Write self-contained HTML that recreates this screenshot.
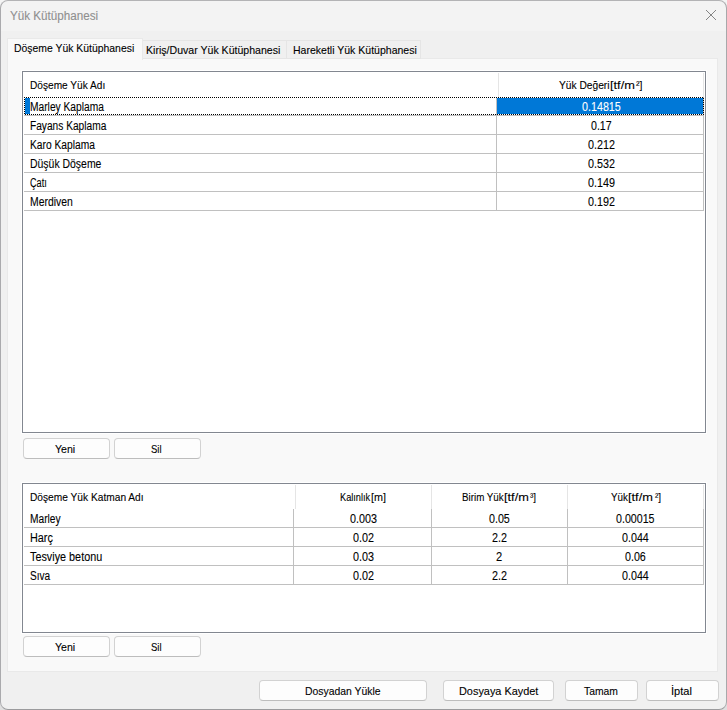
<!DOCTYPE html>
<html><head><meta charset="utf-8"><title>Yük Kütüphanesi</title>
<style>
html,body{margin:0;padding:0;}
body{width:727px;height:710px;background:linear-gradient(180deg,#f4f4f4 0,#f4f4f4 40%,#dfdfdf 60%,#dfdfdf 100%);overflow:hidden;font-family:"Liberation Sans", sans-serif;position:relative;}
#win{position:absolute;left:0;top:0;width:727px;height:710px;border-radius:8px;background:#f0f0f0;overflow:hidden;}
#frame{position:absolute;left:0;top:0;width:727px;height:710px;box-sizing:border-box;border:1px solid;border-color:#b3b3b5 #a8a8aa #9b9b9d #aaaaad;border-radius:8px;}
.a{position:absolute;}
.t{position:absolute;white-space:pre;transform-origin:0 0;display:block;-webkit-text-stroke:0.1px currentColor;}
</style></head><body>
<div id="win">
<div class="a" style="left:0px;top:0px;width:727px;height:31px;background:#f3f3f3"></div>
<svg class="a" style="left:705px;top:9px" width="12" height="12" viewBox="0 0 12 12"><path d="M1 1 L11 11 M11 1 L1 11" stroke="#848484" stroke-width="1" fill="none"/></svg>
<div class="a" style="left:7px;top:58px;width:711px;height:614px;background:#f9f9f9;border:1px solid #e9e9e9;box-sizing:border-box"></div>
<div class="a" style="left:142px;top:40px;width:145px;height:19px;background:#f0f0f0;border:1px solid #e5e5e5;box-sizing:border-box"></div>
<div class="a" style="left:286px;top:40px;width:135px;height:19px;background:#f0f0f0;border:1px solid #e5e5e5;box-sizing:border-box"></div>
<div class="a" style="left:7px;top:38px;width:136px;height:22px;background:#f9f9f9;border:1px solid #e9e9e9;border-bottom:none;box-sizing:border-box"></div>
<div class="a" style="left:22px;top:71px;width:684px;height:362px;background:#fff;border:1px solid #828790;box-sizing:border-box;box-shadow:0 0 0 1px #fff"></div>
<div class="a" style="left:498px;top:73px;width:1px;height:24px;background:#e5e5e5"></div>
<div class="a" style="left:703px;top:73px;width:1px;height:24px;background:#e5e5e5"></div>
<div class="a" style="left:24px;top:115px;width:680px;height:1px;background:#c0c0c0"></div>
<div class="a" style="left:24px;top:134px;width:680px;height:1px;background:#c0c0c0"></div>
<div class="a" style="left:24px;top:153px;width:680px;height:1px;background:#c0c0c0"></div>
<div class="a" style="left:24px;top:172px;width:680px;height:1px;background:#c0c0c0"></div>
<div class="a" style="left:24px;top:191px;width:680px;height:1px;background:#c0c0c0"></div>
<div class="a" style="left:24px;top:210px;width:680px;height:1px;background:#c0c0c0"></div>
<div class="a" style="left:496px;top:97px;width:1px;height:114px;background:#c0c0c0"></div>
<div class="a" style="left:703px;top:97px;width:1px;height:114px;background:#c0c0c0"></div>
<div class="a" style="left:22px;top:483px;width:684px;height:150px;background:#fff;border:1px solid #828790;box-sizing:border-box;box-shadow:0 0 0 1px #fff"></div>
<div class="a" style="left:295px;top:485px;width:1px;height:24px;background:#e5e5e5"></div>
<div class="a" style="left:431px;top:485px;width:1px;height:24px;background:#e5e5e5"></div>
<div class="a" style="left:567px;top:485px;width:1px;height:24px;background:#e5e5e5"></div>
<div class="a" style="left:703px;top:485px;width:1px;height:24px;background:#e5e5e5"></div>
<div class="a" style="left:24px;top:527px;width:680px;height:1px;background:#c0c0c0"></div>
<div class="a" style="left:24px;top:546px;width:680px;height:1px;background:#c0c0c0"></div>
<div class="a" style="left:24px;top:565px;width:680px;height:1px;background:#c0c0c0"></div>
<div class="a" style="left:24px;top:584px;width:680px;height:1px;background:#c0c0c0"></div>
<div class="a" style="left:293px;top:509px;width:1px;height:76px;background:#c0c0c0"></div>
<div class="a" style="left:431px;top:509px;width:1px;height:76px;background:#c0c0c0"></div>
<div class="a" style="left:567px;top:509px;width:1px;height:76px;background:#c0c0c0"></div>
<div class="a" style="left:703px;top:509px;width:1px;height:76px;background:#c0c0c0"></div>
<div class="a" style="left:25px;top:98px;width:5px;height:16px;background:#0078d7"></div>
<div class="a" style="left:497px;top:98px;width:206px;height:16px;background:#0078d7"></div>
<div class="a" style="left:24px;top:97px;width:680px;height:1px;background:linear-gradient(90deg,#000 50%,transparent 50%) 0 0/2px 1px repeat-x"></div>
<div class="a" style="left:24px;top:114px;width:680px;height:1px;background:linear-gradient(90deg,transparent 50%,#000 50%) 0 0/2px 1px repeat-x"></div>
<div class="a" style="left:24px;top:97px;width:1px;height:18px;background:linear-gradient(180deg,#000 50%,transparent 50%) 0 0/1px 2px repeat-y"></div>
<div class="a" style="left:703px;top:97px;width:1px;height:18px;background:linear-gradient(180deg,transparent 50%,#000 50%) 0 0/1px 2px repeat-y"></div>
<div class="a" style="left:23px;top:438px;width:87px;height:21px;background:#fdfdfd;border:1px solid #d2d2d2;border-bottom-color:#bdbdbd;border-radius:4px;box-sizing:border-box"></div>
<div class="a" style="left:114px;top:438px;width:87px;height:21px;background:#fdfdfd;border:1px solid #d2d2d2;border-bottom-color:#bdbdbd;border-radius:4px;box-sizing:border-box"></div>
<div class="a" style="left:23px;top:636px;width:87px;height:21px;background:#fdfdfd;border:1px solid #d2d2d2;border-bottom-color:#bdbdbd;border-radius:4px;box-sizing:border-box"></div>
<div class="a" style="left:114px;top:636px;width:87px;height:21px;background:#fdfdfd;border:1px solid #d2d2d2;border-bottom-color:#bdbdbd;border-radius:4px;box-sizing:border-box"></div>
<div class="a" style="left:259px;top:680px;width:168px;height:21px;background:#fdfdfd;border:1px solid #d2d2d2;border-bottom-color:#bdbdbd;border-radius:4px;box-sizing:border-box"></div>
<div class="a" style="left:443px;top:680px;width:111px;height:21px;background:#fdfdfd;border:1px solid #d2d2d2;border-bottom-color:#bdbdbd;border-radius:4px;box-sizing:border-box"></div>
<div class="a" style="left:565px;top:680px;width:73px;height:21px;background:#fdfdfd;border:1px solid #d2d2d2;border-bottom-color:#bdbdbd;border-radius:4px;box-sizing:border-box"></div>
<div class="a" style="left:646px;top:680px;width:73px;height:21px;background:#fdfdfd;border:1px solid #d2d2d2;border-bottom-color:#bdbdbd;border-radius:4px;box-sizing:border-box"></div>
<span class="t" style="left:10.00px;top:9px;font-size:12px;line-height:15px;color:#8f8f8f;transform:scaleX(0.9721)">Yük Kütüphanesi</span>
<span class="t" style="left:14.30px;top:41px;font-size:11px;line-height:14px;color:#000;transform:scaleX(0.9465)">Döşeme Yük Kütüphanesi</span>
<span class="t" style="left:146.30px;top:43px;font-size:11px;line-height:14px;color:#000;transform:scaleX(0.9612)">Kiriş/Duvar Yük Kütüphanesi</span>
<span class="t" style="left:292.50px;top:43px;font-size:11px;line-height:14px;color:#000;transform:scaleX(0.9564)">Hareketli Yük Kütüphanesi</span>
<span class="t" style="left:29.90px;top:78px;font-size:11px;line-height:14px;color:#000;transform:scaleX(0.9201)">Döşeme Yük Adı</span>
<span class="t" style="left:558.90px;top:78px;font-size:11px;line-height:14px;color:#000;transform:scaleX(0.9279)">Yük Değeri</span>
<span class="t" style="left:609.50px;top:78px;font-size:11px;line-height:14px;color:#000;transform:scaleX(1.1641)">[tf/m</span>
<span class="t" style="left:635.70px;top:78px;font-size:11px;line-height:14px;color:#000;transform:scaleX(0.9652)">²]</span>
<span class="t" style="left:30.40px;top:100px;font-size:12px;line-height:15px;color:#000;transform:scaleX(0.8523)">Marley Kaplama</span>
<span class="t" style="left:582.00px;top:100px;font-size:12px;line-height:15px;color:#fff;transform:scaleX(0.8942)">0.14815</span>
<span class="t" style="left:30.40px;top:119px;font-size:12px;line-height:15px;color:#000;transform:scaleX(0.8473)">Fayans Kaplama</span>
<span class="t" style="left:591.05px;top:119px;font-size:12px;line-height:15px;color:#000;transform:scaleX(0.8862)">0.17</span>
<span class="t" style="left:30.40px;top:138px;font-size:12px;line-height:15px;color:#000;transform:scaleX(0.8534)">Karo Kaplama</span>
<span class="t" style="left:587.90px;top:138px;font-size:12px;line-height:15px;color:#000;transform:scaleX(0.8991)">0.212</span>
<span class="t" style="left:30.40px;top:157px;font-size:12px;line-height:15px;color:#000;transform:scaleX(0.8704)">Düşük Döşeme</span>
<span class="t" style="left:587.90px;top:157px;font-size:12px;line-height:15px;color:#000;transform:scaleX(0.8991)">0.532</span>
<span class="t" style="left:30.40px;top:176px;font-size:12px;line-height:15px;color:#000;transform:scaleX(0.7631)">Çatı</span>
<span class="t" style="left:587.90px;top:176px;font-size:12px;line-height:15px;color:#000;transform:scaleX(0.8991)">0.149</span>
<span class="t" style="left:30.40px;top:195px;font-size:12px;line-height:15px;color:#000;transform:scaleX(0.8671)">Merdiven</span>
<span class="t" style="left:587.90px;top:195px;font-size:12px;line-height:15px;color:#000;transform:scaleX(0.8991)">0.192</span>
<span class="t" style="left:29.60px;top:490px;font-size:11px;line-height:14px;color:#000;transform:scaleX(0.9258)">Döşeme Yük Katman Adı</span>
<span class="t" style="left:339.80px;top:490px;font-size:11px;line-height:14px;color:#000;transform:scaleX(0.8371)">Kalınlık</span>
<span class="t" style="left:370.80px;top:490px;font-size:11px;line-height:14px;color:#000;transform:scaleX(0.9816)">[m]</span>
<span class="t" style="left:461.70px;top:490px;font-size:11px;line-height:14px;color:#000;transform:scaleX(0.8896)">Birim Yük</span>
<span class="t" style="left:503.70px;top:490px;font-size:11px;line-height:14px;color:#000;transform:scaleX(1.1594)">[tf/m</span>
<span class="t" style="left:530.20px;top:490px;font-size:11px;line-height:14px;color:#000;transform:scaleX(0.9058)">³]</span>
<span class="t" style="left:610.70px;top:490px;font-size:11px;line-height:14px;color:#000;transform:scaleX(0.8909)">Yük</span>
<span class="t" style="left:628.00px;top:490px;font-size:11px;line-height:14px;color:#000;transform:scaleX(1.1641)">[tf/m</span>
<span class="t" style="left:654.50px;top:490px;font-size:11px;line-height:14px;color:#000;transform:scaleX(0.9206)">²]</span>
<span class="t" style="left:30.20px;top:512px;font-size:12px;line-height:15px;color:#000;transform:scaleX(0.8496)">Marley</span>
<span class="t" style="left:350.00px;top:512px;font-size:12px;line-height:15px;color:#000;transform:scaleX(0.8991)">0.003</span>
<span class="t" style="left:489.10px;top:512px;font-size:12px;line-height:15px;color:#000;transform:scaleX(0.8904)">0.05</span>
<span class="t" style="left:616.35px;top:512px;font-size:12px;line-height:15px;color:#000;transform:scaleX(0.8873)">0.00015</span>
<span class="t" style="left:30.20px;top:531px;font-size:12px;line-height:15px;color:#000;transform:scaleX(0.9036)">Harç</span>
<span class="t" style="left:353.00px;top:531px;font-size:12px;line-height:15px;color:#000;transform:scaleX(0.8990)">0.02</span>
<span class="t" style="left:492.00px;top:531px;font-size:12px;line-height:15px;color:#000;transform:scaleX(0.8989)">2.2</span>
<span class="t" style="left:622.20px;top:531px;font-size:12px;line-height:15px;color:#000;transform:scaleX(0.8924)">0.044</span>
<span class="t" style="left:30.20px;top:550px;font-size:12px;line-height:15px;color:#000;transform:scaleX(0.9018)">Tesviye betonu</span>
<span class="t" style="left:353.00px;top:550px;font-size:12px;line-height:15px;color:#000;transform:scaleX(0.8990)">0.03</span>
<span class="t" style="left:496.40px;top:550px;font-size:12px;line-height:15px;color:#000;transform:scaleX(0.9271)">2</span>
<span class="t" style="left:625.20px;top:550px;font-size:12px;line-height:15px;color:#000;transform:scaleX(0.8904)">0.06</span>
<span class="t" style="left:30.20px;top:569px;font-size:12px;line-height:15px;color:#000;transform:scaleX(0.8411)">Sıva</span>
<span class="t" style="left:353.00px;top:569px;font-size:12px;line-height:15px;color:#000;transform:scaleX(0.8990)">0.02</span>
<span class="t" style="left:492.00px;top:569px;font-size:12px;line-height:15px;color:#000;transform:scaleX(0.8989)">2.2</span>
<span class="t" style="left:622.20px;top:569px;font-size:12px;line-height:15px;color:#000;transform:scaleX(0.8924)">0.044</span>
<span class="t" style="left:55.10px;top:442px;font-size:11px;line-height:14px;color:#000;transform:scaleX(0.9612)">Yeni</span>
<span class="t" style="left:151.20px;top:442px;font-size:11px;line-height:14px;color:#000;transform:scaleX(0.8664)">Sil</span>
<span class="t" style="left:55.10px;top:640px;font-size:11px;line-height:14px;color:#000;transform:scaleX(0.9612)">Yeni</span>
<span class="t" style="left:151.20px;top:640px;font-size:11px;line-height:14px;color:#000;transform:scaleX(0.8664)">Sil</span>
<span class="t" style="left:304.70px;top:684px;font-size:11px;line-height:14px;color:#000;transform:scaleX(0.9450)">Dosyadan Yükle</span>
<span class="t" style="left:458.50px;top:684px;font-size:11px;line-height:14px;color:#000;transform:scaleX(0.9911)">Dosyaya Kaydet</span>
<span class="t" style="left:583.50px;top:684px;font-size:11px;line-height:14px;color:#000;transform:scaleX(0.9400)">Tamam</span>
<span class="t" style="left:670.70px;top:684px;font-size:11px;line-height:14px;color:#000;transform:scaleX(1.0050)">İptal</span>
</div>
<div id="frame"></div>
</body></html>
